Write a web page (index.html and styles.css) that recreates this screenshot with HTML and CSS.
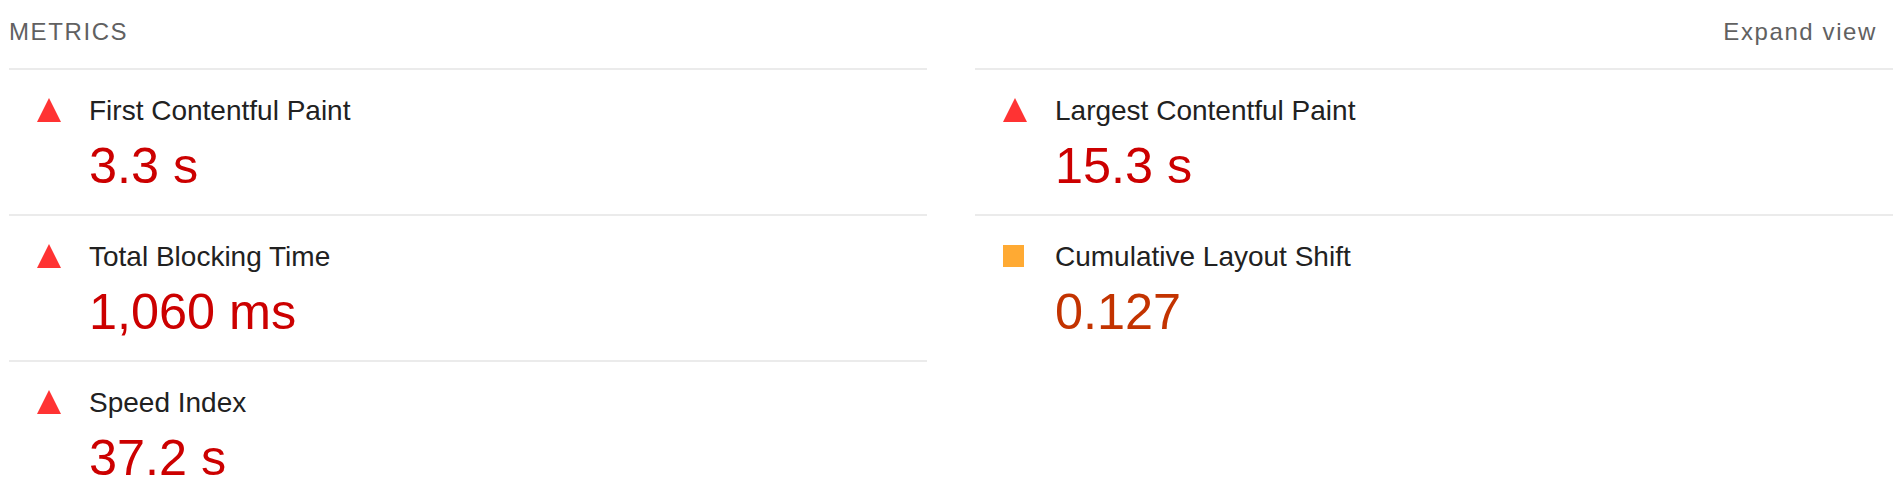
FILE: index.html
```html
<!DOCTYPE html>
<html lang="en">
<head>
<meta charset="utf-8">
<title>Metrics</title>
<link rel="stylesheet" href="styles.css">
</head>
<body>
<div class="header">
  <span class="title">METRICS</span>
  <span class="toggle">Expand view</span>
</div>
<div class="grid">
  <div class="metric">
    <svg class="icon" viewBox="0 0 24 24"><path d="M12 0 24 24H0Z" fill="#f33"/></svg>
    <div class="body"><div class="label">First Contentful Paint</div><div class="value fail">3.3 s</div></div>
  </div>
  <div class="metric">
    <svg class="icon" viewBox="0 0 24 24"><path d="M12 0 24 24H0Z" fill="#f33"/></svg>
    <div class="body"><div class="label">Largest Contentful Paint</div><div class="value fail">15.3 s</div></div>
  </div>
  <div class="metric">
    <svg class="icon" viewBox="0 0 24 24"><path d="M12 0 24 24H0Z" fill="#f33"/></svg>
    <div class="body"><div class="label">Total Blocking Time</div><div class="value fail">1,060 ms</div></div>
  </div>
  <div class="metric">
    <svg class="icon square" viewBox="0 0 21 22"><rect width="21" height="22" fill="#fa3"/></svg>
    <div class="body"><div class="label">Cumulative Layout Shift</div><div class="value average">0.127</div></div>
  </div>
  <div class="metric">
    <svg class="icon" viewBox="0 0 24 24"><path d="M12 0 24 24H0Z" fill="#f33"/></svg>
    <div class="body"><div class="label">Speed Index</div><div class="value fail">37.2 s</div></div>
  </div>
</div>
</body>
</html>
```
FILE: styles.css
```css
html, body { margin: 0; padding: 0; background: #fff; }
body {
  width: 1904px;
  height: 500px;
  overflow: hidden;
  font-family: "Liberation Sans", Arial, sans-serif;
  color: #212121;
}
.header {
  display: flex;
  justify-content: space-between;
  align-items: flex-start;
  height: 68px;
  padding: 18px 27px 0 9px;
  box-sizing: border-box;
  color: #616161;
  font-size: 24px;
  line-height: 28px;
  letter-spacing: 1.6px;
}
.grid {
  display: grid;
  grid-template-columns: 918px 918px;
  column-gap: 48px;
  margin-left: 9px;
}
.metric {
  display: flex;
  height: 144px;
  border-top: 2px solid #ebebeb;
  gap: 28px;
  padding-left: 28px;
}
.icon {
  flex: none;
  width: 24px;
  height: 24px;
  margin-top: 28px;
}
.icon.square {
  width: 21px;
  height: 22px;
  margin: 29px 3px 0 0;
}
.label {
  margin-top: 25px;
  font-size: 28px;
  line-height: 32px;
}
.value {
  margin-top: 11px;
  font-size: 50.4px;
  line-height: 56px;
}
.fail { color: #c00; }
.average { color: #c33300; }
```
